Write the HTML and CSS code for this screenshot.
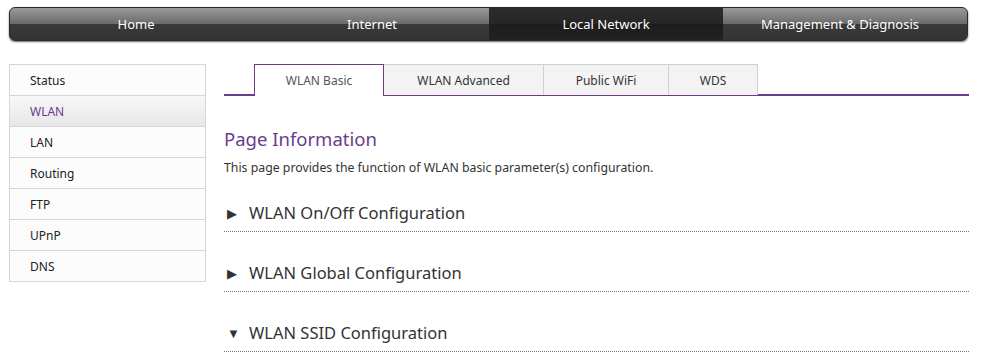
FILE: index.html
```html
<!DOCTYPE html>
<html>
<head>
<meta charset="utf-8">
<link rel="stylesheet" href="styles.css">
</head>
<body>
<div class="topnav">
  <a class="nav-item">Home</a>
  <a class="nav-item">Internet</a>
  <a class="nav-item active">Local Network</a>
  <a class="nav-item">Management &amp; Diagnosis</a>
</div>
<div class="main">
  <ul class="sidebar">
    <li>Status</li>
    <li class="current">WLAN</li>
    <li>LAN</li>
    <li>Routing</li>
    <li>FTP</li>
    <li>UPnP</li>
    <li>DNS</li>
  </ul>
  <div class="content">
    <div class="tabs">
      <div class="tab active">WLAN Basic</div>
      <div class="tab t-adv">WLAN Advanced</div>
      <div class="tab t-pub">Public WiFi</div>
      <div class="tab t-wds">WDS</div>
    </div>
    <h1 class="page-title">Page Information</h1>
    <p class="page-desc">This page provides the function of WLAN basic parameter(s) configuration.</p>
    <div class="section"><span class="arrow">&#9654;</span>WLAN On/Off Configuration</div>
    <div class="section"><span class="arrow">&#9654;</span>WLAN Global Configuration</div>
    <div class="section"><span class="arrow down">&#9660;</span>WLAN SSID Configuration</div>
  </div>
</div>
</body>
</html>
```
FILE: styles.css
```css
* { box-sizing: border-box; }
body {
  margin: 0;
  background: #fff;
  font-family: "Noto Sans", "Open Sans", sans-serif;
  color: #333;
  overflow: hidden;
}
.topnav {
  margin: 7px 14px 0 9px;
  height: 34px;
  border-radius: 6px;
  display: flex;
  padding: 0 9px 0 11px;
  background: linear-gradient(to bottom, #9a9a9a 0%, #6a6a6a 50%, #3a3a3a 50%, #333 100%);
  box-shadow: 0 1px 2px rgba(0,0,0,0.6);
  border: 1px solid #2a2a2a;
  overflow: hidden;
}
.nav-item {
  width: 234px;
  flex: none;
  color: #fff;
  font-size: 13px;
  display: flex;
  align-items: center;
  justify-content: center;
  padding-bottom: 1px;
}
.nav-item:first-child { padding-right: 4px; }
.nav-item.active {
  background: linear-gradient(to bottom, #2c2c2c 0%, #262626 50%, #1c1c1c 50%, #222 100%);
}
.main {
  display: flex;
  padding: 22px 13px 0 9px;
  gap: 18px;
}
.sidebar {
  list-style: none;
  margin: 1px 0 0 0;
  padding: 0;
  width: 197px;
  flex: none;
  border: 1px solid #d6d6d6;
  background: #fcfcfc;
  align-self: flex-start;
}
.sidebar li {
  height: 31px;
  line-height: 30px;
  padding: 1px 0 0 20px;
  font-size: 12px;
  color: #222;
  border-top: 1px solid #d6d6d6;
}
.sidebar li:first-child { border-top: none; height: 30px; }
.sidebar li.current {
  color: #6b3b8c;
  background: linear-gradient(to bottom, #f8f8f8, #e6e6e6);
}
.content {
  flex: 1;
}
.tabs {
  display: flex;
  padding-left: 30px;
  border-bottom: 2px solid #6b3b8c;
  height: 32px;
  margin-top: 1px;
}
.tab {
  height: 31px;
  line-height: 30px;
  padding-top: 1px;
  font-size: 12px;
  text-align: center;
  color: #333;
  background: #f3f3f3;
  border: 1px solid #d0d0d0;
  border-bottom: none;
  border-left: none;
}
.tab.active {
  width: 130px;
  background: #fff;
  border: 1px solid #6b3b8c;
  border-bottom: none;
  height: 32px;
  margin-bottom: -2px;
  color: #555;
}
.t-adv { width: 160px; }
.t-pub { width: 125px; }
.t-wds { width: 89px; }
.page-title {
  margin: 25px 0 0 0;
  font-size: 18.5px;
  font-weight: normal;
  color: #6b3b8c;
  line-height: 36px;
  height: 36px;
}
.page-desc {
  margin: 1px 0 0 0;
  font-size: 12.3px;
  line-height: 20px;
  color: #333;
}
.section {
  margin-top: 21px;
  font-size: 16.5px;
  color: #333;
  height: 33px;
  line-height: 28px;
  border-bottom: 1px dotted #777;
}
.section + .section { margin-top: 27px; }
.arrow {
  display: inline-block;
  width: 25px;
  font-size: 13px;
  padding-left: 3px;
  vertical-align: 1px;
}
```
